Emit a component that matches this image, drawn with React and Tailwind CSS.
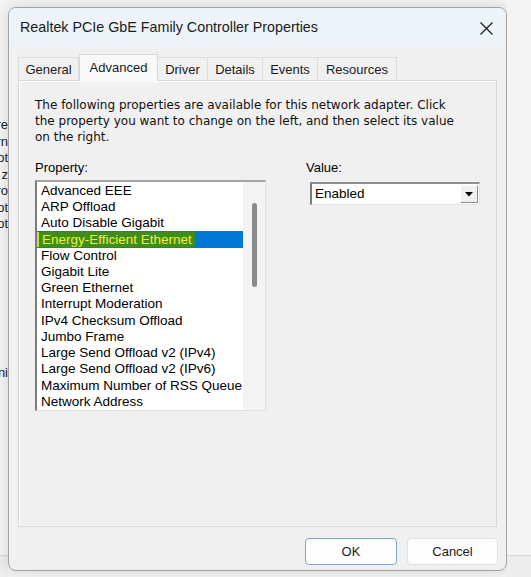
const properties = [
  'Advanced EEE',
  'ARP Offload',
  'Auto Disable Gigabit',
  'Energy-Efficient Ethernet',
  'Flow Control',
  'Gigabit Lite',
  'Green Ethernet',
  'Interrupt Moderation',
  'IPv4 Checksum Offload',
  'Jumbo Frame',
  'Large Send Offload v2 (IPv4)',
  'Large Send Offload v2 (IPv6)',
  'Maximum Number of RSS Queue',
  'Network Address',
];

const tabs = [
  { label: 'General', w: 'w-[61px]' },
  { label: 'Advanced', w: 'w-[79px]', active: true },
  { label: 'Driver', w: 'w-[50px]' },
  { label: 'Details', w: 'w-[55px]' },
  { label: 'Events', w: 'w-[55px]' },
  { label: 'Resources', w: 'w-[79px]' },
];

// right ends of the window behind the dialog
const behind = ['re', 'rn', 'ot', 'z', 'tro', 'ot', 'ot', '', '', '', '', '', '', '', '', 'ni'];

export default function App() {
  return (
    <div className="w-[531px] h-[577px] flex bg-[#f4f4f4] overflow-hidden font-['Liberation_Sans',Arial,sans-serif] text-[#000]">
      {/* window behind */}
      <div className="w-[8px] shrink-0 flex flex-col">
        <div className="h-[555px] flex flex-col items-end pt-[117px] text-[13px] overflow-hidden text-[#222]">
          {behind.map((t, i) => (
            <div key={i} className="h-[16.5px] leading-[16.5px] whitespace-nowrap">{t}</div>
          ))}
        </div>
        <div className="flex-1 border-t border-[#d9d9d9] bg-[#ededed]" />
      </div>

      {/* dialog */}
      <div className="mt-[7px] w-[499px] h-[564px] shrink-0 rounded-[8px] border border-[#a3a3a3] shadow-[0_0_14px_rgba(0,0,0,0.14)] overflow-hidden flex flex-col bg-[#f0f0f0]">
        {/* title bar */}
        <div className="h-[39px] bg-[#edf3f8] flex items-center justify-between pl-[11px] pr-[13px]">
          <span className="text-[14.3px] text-[#1b1b1b]">Realtek PCIe GbE Family Controller Properties</span>
          <svg width="13" height="13" viewBox="0 0 13 13" className="mt-[1px]">
            <path d="M0.5 0.5L12.5 12.5M12.5 0.5L0.5 12.5" stroke="#1b1b1b" strokeWidth="1.2" />
          </svg>
        </div>

        <div className="flex-1 flex flex-col pl-[9px] pr-[8px]">
          {/* tabs */}
          <div className="mt-[8px] h-[25px] flex items-end text-[13px] text-[#1b1b1b]">
            {tabs.map((t) =>
              t.active ? (
                <div
                  key={t.label}
                  className={`${t.w} h-[27px] -mb-px z-10 bg-[#f9f9f9] border border-b-0 border-[#d9d9d9] flex items-start justify-center pt-[3px]`}
                >
                  {t.label}
                </div>
              ) : (
                <div
                  key={t.label}
                  className={`${t.w} h-[23px] border-t border-r border-[#dcdcdc] first:border-l flex items-center justify-center pt-[1px]`}
                >
                  {t.label}
                </div>
              )
            )}
          </div>

          {/* panel */}
          <div className="w-[479px] h-[447px] border border-[#d9d9d9] bg-[#f0f0f0] shadow-[inset_1px_1px_0_#fbfbfb] pl-[16px] pt-[16px] text-[13px]">
            <p className="leading-[16px] whitespace-nowrap text-[12px] font-['DejaVu_Sans',Verdana,sans-serif] text-[#111]">
              The following properties are available for this network adapter. Click
              <br />
              the property you want to change on the left, and then select its value
              <br />
              on the right.
            </p>

            <div className="mt-[15px] flex gap-[40px]">
              {/* property list */}
              <div className="w-[231px]">
                <div className="leading-[16px]">Property:</div>
                <div className="mt-[4px] h-[231px] flex border-l-2 border-t-2 border-r border-b border-l-[#7b7b7b] border-t-[#a5a5a5] border-r-[#e2e2e2] border-b-[#e2e2e2]">
                  <div className="w-[206px] bg-white pt-[0.5px] text-[13.5px]">
                    {properties.map((p) =>
                      p === 'Energy-Efficient Ethernet' ? (
                        <div key={p} className="h-[16.25px] bg-[#0078d7] flex items-center">
                          <span className="h-[15px] leading-[15px] bg-[#3f8d1a] text-[#e9f52c] pl-[3px] pr-[3px] border-l-2 border-[#d6dd2c] whitespace-nowrap">
                            {p}
                          </span>
                        </div>
                      ) : (
                        <div key={p} className="h-[16.25px] leading-[16.25px] pl-[4px] whitespace-nowrap overflow-hidden">
                          {p}
                        </div>
                      )
                    )}
                  </div>
                  <div className="flex-1 bg-[#f3f3f3] pl-[9px] pt-[21px]">
                    <div className="w-[5px] h-[84px] rounded-full bg-[#8a8a8a]" />
                  </div>
                </div>
              </div>

              {/* value */}
              <div className="w-[174px]">
                <div className="leading-[16px]">Value:</div>
                <div className="mt-[6px] ml-[4px] w-[170px] h-[23px] flex items-center bg-white border-l-2 border-t-2 border-r border-b border-l-[#7b7b7b] border-t-[#8f8f8f] border-r-[#e2e2e2] border-b-[#e2e2e2]">
                  <span className="flex-1 pl-[3px] text-[13.5px]">Enabled</span>
                  <div className="w-[18px] h-[18px] mr-px flex items-center justify-center bg-[#f0f0f0] border border-t-white border-l-white border-r-[#8a8a8a] border-b-[#8a8a8a]">
                    <svg width="8" height="5" viewBox="0 0 8 5">
                      <path d="M0 0h8L4 4.5z" fill="#000" />
                    </svg>
                  </div>
                </div>
              </div>
            </div>
          </div>

          {/* buttons */}
          <div className="mt-[11px] flex justify-end gap-[10px] text-[13px] text-[#1b1b1b]">
            <button className="w-[92px] h-[27px] rounded-[4px] bg-[#fdfdfd] border border-[#7fa6d3]">OK</button>
            <button className="w-[91px] h-[27px] rounded-[4px] bg-[#fdfdfd] border border-[#e0e0e0]">Cancel</button>
          </div>
        </div>
      </div>

      <div className="flex-1 flex flex-col">
        <div className="h-[555px] bg-[#f4f4f4]" />
        <div className="flex-1 border-t border-[#d9d9d9] bg-[#ededed]" />
      </div>
    </div>
  );
}
